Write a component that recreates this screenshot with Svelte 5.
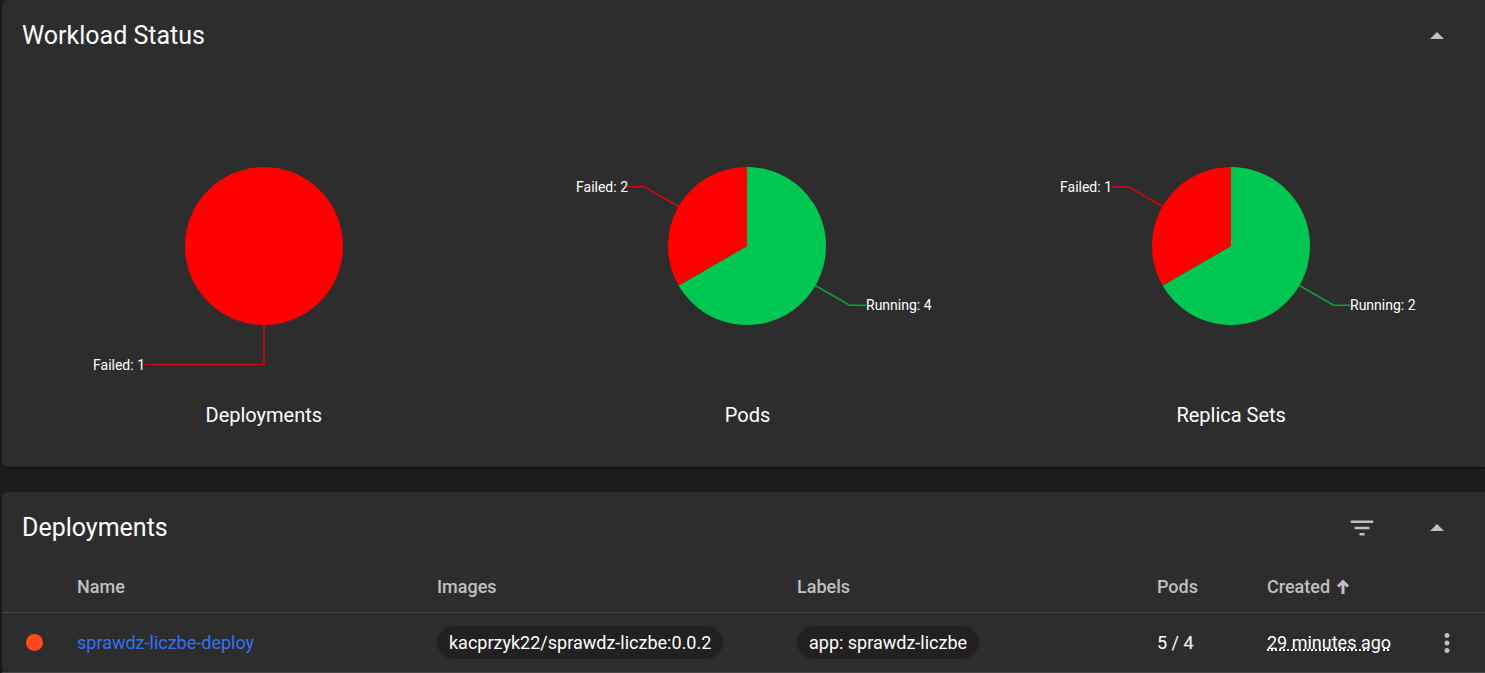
<script>
  const RADIUS = 79;
  const LABEL_X = 119;

  const charts = [
    { title: 'Deployments', slices: [{ name: 'Failed', value: 1, color: '#ff0000' }] },
    {
      title: 'Pods',
      slices: [
        { name: 'Running', value: 4, color: '#00c752' },
        { name: 'Failed', value: 2, color: '#ff0000' }
      ]
    },
    {
      title: 'Replica Sets',
      slices: [
        { name: 'Running', value: 2, color: '#00c752' },
        { name: 'Failed', value: 1, color: '#ff0000' }
      ]
    }
  ].map((chart) => ({ ...chart, slices: layoutSlices(chart.slices) }));

  const deployments = [
    {
      name: 'sprawdz-liczbe-deploy',
      images: ['kacprzyk22/sprawdz-liczbe:0.0.2'],
      labels: ['app: sprawdz-liczbe'],
      pods: '5 / 4',
      created: '29 minutes ago'
    }
  ];

  let statusOpen = $state(true);
  let listOpen = $state(true);

  function point(fraction, radius) {
    const angle = fraction * 2 * Math.PI;
    return [Math.sin(angle) * radius, -Math.cos(angle) * radius];
  }

  function layoutSlices(slices) {
    const total = slices.reduce((sum, slice) => sum + slice.value, 0);
    let start = 0;
    return slices.map((slice) => {
      const share = slice.value / total;
      const end = start + share;
      const middle = start + share / 2;
      const from = point(start, RADIUS);
      const to = point(end, RADIUS);
      const edge = point(middle, RADIUS);
      const elbow = point(middle, RADIUS * 1.5);
      const side = middle < 0.5 ? 1 : -1;
      start = end;
      return {
        ...slice,
        full: share === 1,
        path: `M0 0L${from}A${RADIUS} ${RADIUS} 0 ${share > 0.5 ? 1 : 0} 1 ${to}Z`,
        line: `${edge} ${elbow} ${side * LABEL_X},${elbow[1]}`,
        x: side * LABEL_X,
        y: elbow[1],
        anchor: side > 0 ? 'start' : 'end'
      };
    });
  }
</script>

{#snippet toggle(open, label, onclick)}
  <button class="icon-button" type="button" aria-label={label} aria-expanded={open} {onclick}>
    <svg class:closed={!open} width="30" height="30" viewBox="0 0 30 30" aria-hidden="true">
      <path d="M8 18 15 11 22 18Z" />
    </svg>
  </button>
{/snippet}

<main>
  <section class="card">
    <header>
      <h2>Workload Status</h2>
      {@render toggle(statusOpen, 'Toggle workload status', () => (statusOpen = !statusOpen))}
    </header>
    {#if statusOpen}
      <div class="charts">
        {#each charts as chart}
          <figure>
            <svg class="pie" viewBox="-220 -176 440 320" width="440" height="320" role="img" aria-label={chart.title}>
              {#each chart.slices as slice}
                {#if slice.full}
                  <circle r={RADIUS} fill={slice.color} />
                {:else}
                  <path d={slice.path} fill={slice.color} />
                {/if}
                <polyline points={slice.line} stroke={slice.color} stroke-width="1.5" />
                <text x={slice.x} y={slice.y} dy="5" text-anchor={slice.anchor}>{slice.name}: {slice.value}</text>
              {/each}
            </svg>
            <figcaption>{chart.title}</figcaption>
          </figure>
        {/each}
      </div>
    {/if}
  </section>

  <section class="card">
    <header>
      <h2>Deployments</h2>
      <button class="icon-button filter" type="button" aria-label="Filter">
        <svg width="30" height="30" viewBox="0 0 24 24" aria-hidden="true">
          <path d="M10 18h4v-2h-4v2zM3 6v2h18V6H3zm3 7h12v-2H6v2z" />
        </svg>
      </button>
      {@render toggle(listOpen, 'Toggle deployments', () => (listOpen = !listOpen))}
    </header>
    {#if listOpen}
      <table>
        <colgroup>
          <col class="status-col" />
          <col />
          <col />
          <col />
          <col class="pods-col" />
          <col class="created-col" />
          <col class="menu-col" />
        </colgroup>
        <thead>
          <tr>
            <th></th>
            <th>Name</th>
            <th>Images</th>
            <th>Labels</th>
            <th>Pods</th>
            <th aria-sort="ascending">
              <button class="sort" type="button">
                Created
                <svg width="14" height="16" viewBox="0 0 14 16" aria-hidden="true">
                  <path d="M7 15V3M2 7.500 7 2.500 12 7.500" />
                </svg>
              </button>
            </th>
            <th></th>
          </tr>
        </thead>
        <tbody>
          {#each deployments as row}
            <tr>
              <td><span class="status"></span></td>
              <td><a href="#deployment">{row.name}</a></td>
              <td>{#each row.images as image}<span class="chip">{image}</span>{/each}</td>
              <td>{#each row.labels as label}<span class="chip">{label}</span>{/each}</td>
              <td>{row.pods}</td>
              <td><span class="date">{row.created}</span></td>
              <td>
                <button class="icon-button menu" type="button" aria-label="Actions">
                  <svg width="30" height="30" viewBox="0 0 24 24" aria-hidden="true">
                    <path d="M12 8c1.100 0 2-.9 2-2s-.9-2-2-2-2 .9-2 2 .9 2 2 2zm0 2c-1.100 0-2 .9-2 2s.9 2 2 2 2-.9 2-2-.9-2-2-2zm0 6c-1.100 0-2 .9-2 2s.9 2 2 2 2-.9 2-2-.9-2-2-2z" />
                  </svg>
                </button>
              </td>
            </tr>
          {/each}
        </tbody>
      </table>
    {/if}
  </section>
</main>

<style>
  :global(body) {
    margin: 0;
    background: #1c1c1c;
  }

  main {
    display: flex;
    flex-direction: column;
    gap: 25px;
    padding-left: 2px;
    overflow: hidden;
    color: #fff;
    font: 400 18px/24px Roboto, sans-serif;
  }

  .card {
    background: #2d2d2d;
    border-radius: 5px 0 0 5px;
    box-shadow: 0 1px 2px rgba(0, 0, 0, 0.6);
  }

  header {
    box-sizing: border-box;
    display: flex;
    align-items: center;
    height: 70px;
    padding: 2px 23px 0 20px;
  }

  h2 {
    flex: 1;
    margin: 0;
    font-size: 25px;
    font-weight: 400;
    line-height: 32px;
  }

  button {
    padding: 0;
    border: 0;
    background: none;
    color: #c0c0c0;
    font: inherit;
    cursor: pointer;
  }

  .icon-button {
    display: grid;
    place-items: center;
    width: 50px;
    height: 50px;
    fill: #c0c0c0;
  }

  .filter {
    margin-right: 25px;
  }

  .closed {
    transform: rotate(180deg);
  }

  .charts {
    display: grid;
    grid-template-columns: repeat(3, minmax(0, 1fr));
    padding: 0 12px 36px 20px;
  }

  figure {
    display: flex;
    flex-direction: column;
    align-items: center;
    gap: 10px;
    margin: 0;
    color: #fff;
  }

  .pie {
    max-width: 100%;
    overflow: visible;
    font-size: 14px;
  }

  .pie text {
    fill: #fff;
  }

  .pie polyline {
    fill: none;
    stroke-opacity: 0.75;
  }

  figcaption {
    font-size: 20px;
    line-height: 31px;
  }

  table {
    width: 100%;
    table-layout: fixed;
    border-collapse: collapse;
  }

  .status-col {
    width: 75px;
  }

  .pods-col {
    width: 110px;
  }

  .created-col {
    width: 142px;
  }

  .menu-col {
    width: 76px;
  }

  th,
  td {
    padding: 0;
    border-bottom: 1px solid #464646;
    text-align: left;
    white-space: nowrap;
  }

  th {
    height: 50px;
    color: #c0c0c0;
    font-weight: 500;
  }

  td {
    height: 59px;
  }

  a {
    color: #3273f5;
    text-decoration: none;
  }

  .sort {
    display: flex;
    align-items: center;
    gap: 6px;
    font-weight: 500;
  }

  .sort path {
    fill: none;
    stroke: #c0c0c0;
    stroke-width: 3px;
  }

  .status {
    display: block;
    width: 17px;
    height: 17px;
    margin-left: 24px;
    border-radius: 50%;
    background: #ff4a1c;
  }

  .chip {
    display: inline-block;
    padding: 0 12px;
    border-radius: 17px;
    background: #212121;
    line-height: 33px;
  }

  .date {
    text-decoration: underline dotted;
  }

  .menu {
    margin: 0 auto;
  }
</style>
